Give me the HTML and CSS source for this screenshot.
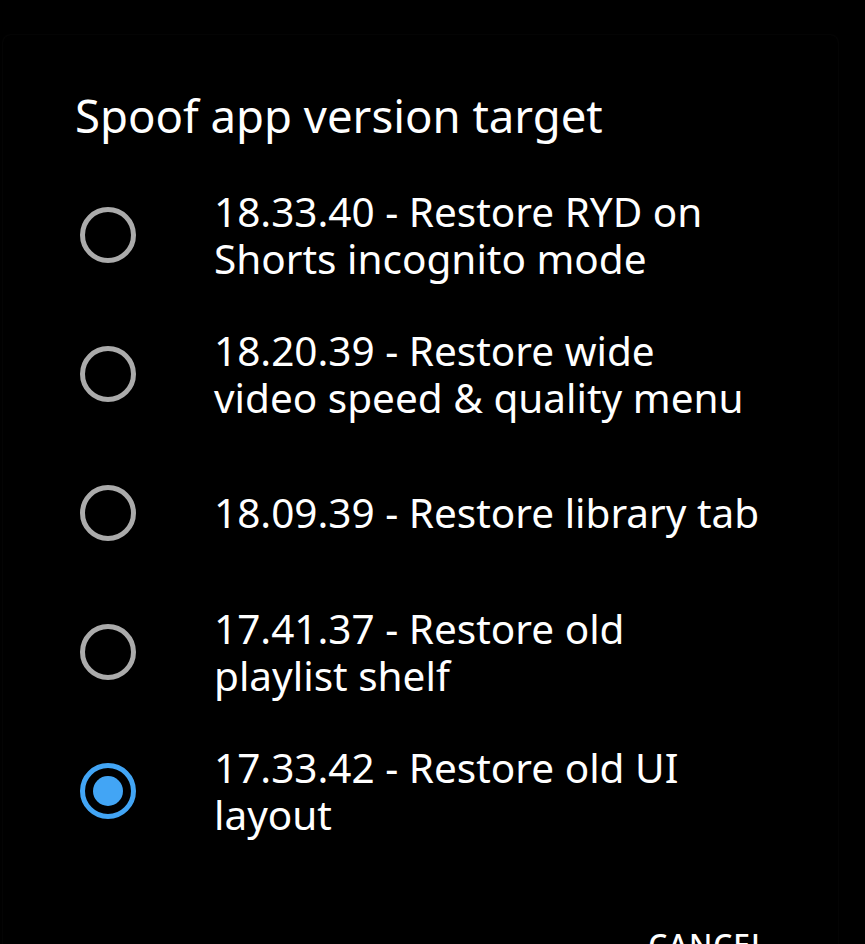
FILE: index.html
```html
<!DOCTYPE html>
<html>
<head>
<meta charset="utf-8">
<link rel="stylesheet" href="styles.css">
</head>
<body>
<div class="dialog">
  <h1 class="title">Spoof app version target</h1>
  <div class="options">
    <div class="option"><span class="radio"></span><span class="label">18.33.40 - Restore RYD on<br>Shorts incognito mode</span></div>
    <div class="option"><span class="radio"></span><span class="label">18.20.39 - Restore wide<br>video speed &amp; quality menu</span></div>
    <div class="option"><span class="radio"></span><span class="label">18.09.39 - Restore library tab</span></div>
    <div class="option"><span class="radio"></span><span class="label">17.41.37 - Restore old<br>playlist shelf</span></div>
    <div class="option"><span class="radio checked"></span><span class="label">17.33.42 - Restore old UI<br>layout</span></div>
  </div>
  <div class="actions"><span class="btn">CANCEL</span></div>
</div>
</body>
</html>
```
FILE: styles.css
```css
html, body {
  margin: 0;
  background: #000;
  height: 100%;
  overflow: hidden;
}
body {
  font-family: "Noto Sans", "Open Sans", sans-serif;
  color: #fff;
}
.dialog {
  margin: 35px 27px 0 3px;
  background: #000;
  border-radius: 8px;
  box-shadow: 0 0 2px #111;
}
.title {
  margin: 0 0 9px;
  padding: 39px 0 0 72px;
  font-weight: 400;
  font-size: 45.5px;
  line-height: 82px;
  height: 82px;
}
.options {
  display: flex;
  flex-direction: column;
}
.option {
  display: flex;
  align-items: center;
  height: 139px;
  padding-left: 77px;
}
.radio {
  flex: none;
  width: 56px;
  height: 56px;
  box-sizing: border-box;
  border: 5px solid #ababab;
  border-radius: 50%;
  margin-right: 78px;
  display: flex;
  align-items: center;
  justify-content: center;
}
.radio.checked {
  border-color: #42a5f5;
}
.radio.checked::after {
  content: "";
  width: 30px;
  height: 30px;
  border-radius: 50%;
  background: #42a5f5;
}
.label {
  font-size: 40.5px;
  line-height: 47px;
}
.actions {
  display: flex;
  justify-content: flex-end;
  padding: 64px 70px 0 0;
}
.btn {
  font-size: 30px;
  letter-spacing: 1px;
  font-weight: 500;
}
```
